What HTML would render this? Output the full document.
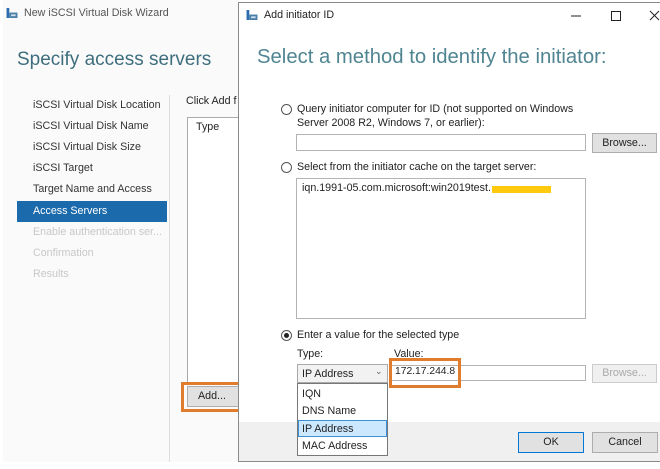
<!DOCTYPE html>
<html><head><meta charset="utf-8"><style>
*{margin:0;padding:0;box-sizing:border-box}
body{width:660px;height:469px;background:#fff;position:relative;overflow:hidden;font-family:"Liberation Sans",sans-serif;font-size:10.7px;color:#222}
.a{position:absolute;white-space:nowrap}
.nav{position:absolute;left:33px;font-size:10.7px;color:#333}
.dis{color:#c8c8c8}
.box{position:absolute;background:#fff;border:1px solid #b4b4b4}
.btn{position:absolute;background:#e1e1e1;border:1px solid #adadad;text-align:center;font-size:10.7px;line-height:18px;color:#222}
.radio{position:absolute;width:11px;height:11px;border:1px solid #555;border-radius:50%;background:#fff}
.icon{position:absolute;width:12px;height:10px}
</style></head><body>
<div class="a" style="left:3px;top:0;width:236px;height:462px;background:#fafafa"></div>
<svg class="icon" style="left:6px;top:8px" width="12" height="11" viewBox="0 0 12 11"><rect x="0" y="0" width="3" height="11" fill="#2b6cb0"/><rect x="3" y="5" width="9" height="6" fill="#4a7fa8"/><rect x="5" y="7" width="5" height="2" fill="#cfe0ee"/></svg>
<div class="a" style="left:24px;top:7px;color:#555">New iSCSI Virtual Disk Wizard</div>
<div class="a" style="left:17px;top:49px;font-size:19px;color:#3e6e7e">Specify access servers</div>
<div class="nav" style="top:99px">iSCSI Virtual Disk Location</div>
<div class="nav" style="top:120px">iSCSI Virtual Disk Name</div>
<div class="nav" style="top:141px">iSCSI Virtual Disk Size</div>
<div class="nav" style="top:162px">iSCSI Target</div>
<div class="nav" style="top:183px">Target Name and Access</div>
<div class="a" style="left:17px;top:201px;width:150px;height:21px;background:#1a6aac"></div>
<div class="nav" style="top:205px;color:#fff">Access Servers</div>
<div class="nav dis" style="top:226px">Enable authentication ser...</div>
<div class="nav dis" style="top:247px">Confirmation</div>
<div class="nav dis" style="top:268px">Results</div>
<div class="a" style="left:169px;top:95px;width:1px;height:367px;background:#ddd"></div>
<div class="a" style="left:186px;top:95px;color:#222">Click Add f</div>
<div class="box" style="left:187px;top:117px;width:60px;height:266px;border-color:#aaa"></div>
<div class="a" style="left:196px;top:121px">Type</div>
<div class="a" style="left:181px;top:382px;width:57px;height:30px;border:3px solid #e07c2c;border-right:none"></div>
<div class="btn" style="left:187px;top:386px;width:60px;height:21px;line-height:19px;padding-right:10px">Add...</div>
<div class="a" style="left:238px;top:2px;width:424px;height:460px;background:#fff;border:1px solid #8a8a8a"></div>
<div class="a" style="left:239px;top:422px;width:422px;height:39px;background:#f0f0f0"></div>
<svg class="icon" style="left:246px;top:10px" width="12" height="11" viewBox="0 0 12 11"><rect x="0" y="0" width="3" height="11" fill="#2b6cb0"/><rect x="3" y="5" width="9" height="6" fill="#4a7fa8"/><rect x="5" y="7" width="5" height="2" fill="#cfe0ee"/></svg>
<div class="a" style="left:264px;top:9px">Add initiator ID</div>
<svg class="a" style="left:570px;top:8px" width="90" height="16" viewBox="0 0 90 16"><line x1="1" y1="8" x2="11" y2="8" stroke="#222"/><rect x="41.5" y="3.5" width="9" height="9" fill="none" stroke="#222"/><path d="M80 3L89 12M89 3L80 12" stroke="#222"/></svg>
<div class="a" style="left:257px;top:46px;font-size:20.3px;color:#4f8591">Select a method to identify the initiator:</div>
<div class="radio" style="left:281px;top:104px"></div>
<div class="a" style="left:297px;top:103px">Query initiator computer for ID (not supported on Windows</div>
<div class="a" style="left:297px;top:117px">Server 2008 R2, Windows 7, or earlier):</div>
<div class="box" style="left:296px;top:134px;width:290px;height:17px"></div>
<div class="btn" style="left:592px;top:133px;width:65px;height:20px">Browse...</div>
<div class="radio" style="left:281px;top:162px"></div>
<div class="a" style="left:297px;top:161px">Select from the initiator cache on the target server:</div>
<div class="box" style="left:296px;top:178px;width:290px;height:141px"></div>
<div class="a" style="left:302px;top:182px">iqn.1991-05.com.microsoft:win2019test.</div>
<div class="a" style="left:492px;top:186px;width:59px;height:7px;background:#ffc90e"></div>
<div class="radio" style="left:281px;top:330px"></div>
<div class="a" style="left:284px;top:333px;width:5px;height:5px;border-radius:50%;background:#222"></div>
<div class="a" style="left:297px;top:329px">Enter a value for the selected type</div>
<div class="a" style="left:297px;top:348px">Type:</div>
<div class="a" style="left:394px;top:348px">Value:</div>
<div class="box" style="left:297px;top:364px;width:91px;height:19px;background:#f2f2f2;border-color:#aaa"></div>
<div class="a" style="left:302px;top:368px">IP Address</div>
<div class="a" style="left:375px;top:366px;font-size:9px;color:#666">&#8964;</div>
<div class="box" style="left:391px;top:365px;width:195px;height:16px"></div>
<div class="a" style="left:395px;top:366px;font-size:10.3px">172.17.244.8</div>
<div class="a" style="left:389px;top:358px;width:72px;height:30px;border:3px solid #e07c2c"></div>
<div class="btn" style="left:592px;top:364px;width:65px;height:19px;background:#f0f0f0;border-color:#ccc;color:#aaa;line-height:17px">Browse...</div>
<div class="box" style="left:297px;top:383px;width:91px;height:73px;border-color:#777"></div>
<div class="a" style="left:302px;top:388px">IQN</div>
<div class="a" style="left:302px;top:405px">DNS Name</div>
<div class="a" style="left:298px;top:420px;width:89px;height:17px;background:#cce8ff;border:1px solid #3d8fd6"></div>
<div class="a" style="left:302px;top:423px">IP Address</div>
<div class="a" style="left:302px;top:440px">MAC Address</div>
<div class="btn" style="left:518px;top:432px;width:66px;height:21px;border-color:#0078d7;line-height:19px">OK</div>
<div class="btn" style="left:592px;top:432px;width:66px;height:21px;line-height:19px">Cancel</div>
</body></html>
